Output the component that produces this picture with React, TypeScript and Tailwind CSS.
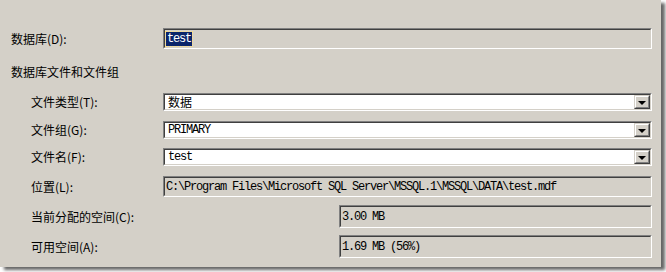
const cjk = "font-['Noto_Sans_CJK_SC',sans-serif] text-[12px] leading-none text-black"
const mono = "font-['Liberation_Mono','Noto_Sans_CJK_SC',monospace] text-[12px] tracking-[-1.2px] leading-none text-black"

const Sunken = ({
  className,
  white,
  children,
}: {
  className: string
  white?: boolean
  children?: React.ReactNode
}) => (
  <div
    className={`border border-t-[#808080] border-l-[#808080] border-b-white border-r-white ${className}`}
  >
    <div
      className={`h-full border border-t-[#404040] border-l-[#404040] border-b-[#d4d0c8] border-r-[#d4d0c8] flex items-center ${
        white ? 'bg-white' : 'bg-[#d4d0c8]'
      }`}
    >
      {children}
    </div>
  </div>
)

const Combo = ({ value }: { value: string }) => (
  <Sunken className="w-[489px] h-[18px]" white>
    <span className={`flex-1 pl-[3px] ${/[A-Za-z]/.test(value) ? mono : cjk}`}>{value}</span>
    <div className="w-[16px] h-full border border-t-[#d4d0c8] border-l-[#d4d0c8] border-b-[#404040] border-r-[#404040]">
      <div className="h-full bg-[#d4d0c8] border border-t-white border-l-white border-b-[#808080] border-r-[#808080] flex items-center justify-center">
        <div className="w-0 h-0 border-l-[4px] border-r-[4px] border-t-[4px] border-l-transparent border-r-transparent border-t-black mt-[1px]" />
      </div>
    </div>
  </Sunken>
)

export default function App() {
  return (
    <div className="w-[666px] h-[272px] bg-white overflow-hidden">
      <div className="w-[661px] h-[267px] bg-[#d4d0c8] shadow-[4px_3px_3px_rgba(0,0,0,0.6)] flex flex-col">
        <div className="flex items-center mt-[28px] h-[21px]">
          <span className={`${cjk} w-[163px] shrink-0 pl-[11px]`}>数据库(D):</span>
          <Sunken className="w-[489px] h-[21px]">
            <span className={`${mono} ml-[1px] bg-[#0a246a] text-white px-[1px] py-[1px] outline-1 outline-dotted outline-[#ffe080]`}>
              test
            </span>
          </Sunken>
        </div>

        <div className={`${cjk} mt-[13px] h-[20px] flex items-center pl-[11px]`}>数据库文件和文件组</div>

        <div className="flex items-center mt-[11px] h-[18px]">
          <span className={`${cjk} w-[163px] shrink-0 pl-[31px]`}>文件类型(T):</span>
          <Combo value="数据" />
        </div>
        <div className="flex items-center mt-[10px] h-[18px]">
          <span className={`${cjk} w-[163px] shrink-0 pl-[31px]`}>文件组(G):</span>
          <Combo value="PRIMARY" />
        </div>
        <div className="flex items-center mt-[9px] h-[18px]">
          <span className={`${cjk} w-[163px] shrink-0 pl-[31px]`}>文件名(F):</span>
          <Combo value="test" />
        </div>

        <div className="flex items-center mt-[10px] h-[21px]">
          <span className={`${cjk} w-[163px] shrink-0 pl-[31px]`}>位置(L):</span>
          <Sunken className="w-[489px] h-[21px]">
            <span className={`${mono} pl-[1px]`}>C:\Program Files\Microsoft SQL Server\MSSQL.1\MSSQL\DATA\test.mdf</span>
          </Sunken>
        </div>

        <div className="flex items-center mt-[8px] h-[23px]">
          <span className={`${cjk} w-[339px] shrink-0 pl-[31px]`}>当前分配的空间(C):</span>
          <Sunken className="w-[313px] h-[23px]">
            <span className={`${mono} pl-[1px]`}>3.00 MB</span>
          </Sunken>
        </div>
        <div className="flex items-center mt-[7px] h-[23px]">
          <span className={`${cjk} w-[339px] shrink-0 pl-[31px]`}>可用空间(A):</span>
          <Sunken className="w-[313px] h-[23px]">
            <span className={`${mono} pl-[1px]`}>1.69 MB (56%)</span>
          </Sunken>
        </div>
      </div>
    </div>
  )
}
